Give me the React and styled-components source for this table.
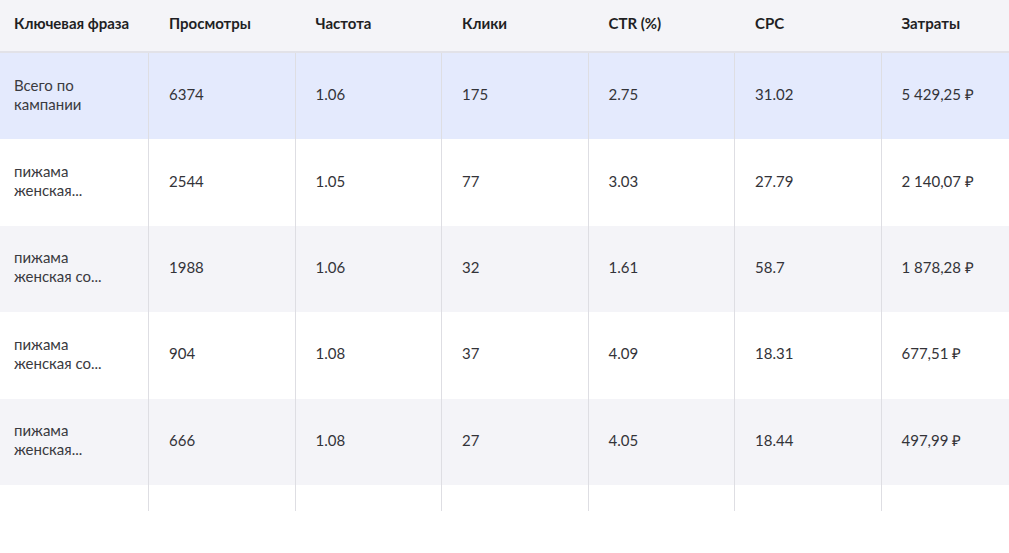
import styled, { createGlobalStyle } from "styled-components";

const GlobalStyle = createGlobalStyle`
	html, body {
		margin: 0;
		padding: 0;
		background: #fff;
		font-family: Lato, "Open Sans", sans-serif;
	}
`;

const columns = ["Ключевая фраза", "Просмотры", "Частота", "Клики", "CTR (%)", "CPC", "Затраты"];

const rows = [
	{ phrase: "Всего по кампании", values: ["6374", "1.06", "175", "2.75", "31.02", "5 429,25 ₽"], total: true },
	{ phrase: "пижама женская...", values: ["2544", "1.05", "77", "3.03", "27.79", "2 140,07 ₽"] },
	{ phrase: "пижама женская со...", values: ["1988", "1.06", "32", "1.61", "58.7", "1 878,28 ₽"] },
	{ phrase: "пижама женская со...", values: ["904", "1.08", "37", "4.09", "18.31", "677,51 ₽"] },
	{ phrase: "пижама женская...", values: ["666", "1.08", "27", "4.05", "18.44", "497,99 ₽"] },
];

const Grid = `
	display: grid;
	grid-template-columns: 148px repeat(5, 146.5px) 146px;
`;

const Table = styled.div`
	width: 1027px;
	overflow: hidden;
`;

const HeadRow = styled.div`
	${Grid}
	height: 51px;
	background: #f4f4f8;
	border-bottom: 2px solid #e2e2e8;
`;

const HeadCell = styled.div`
	display: flex;
	align-items: center;
	padding-left: ${(p) => (p.$first ? "14px" : "21px")};
	font-size: 15px;
	font-weight: 700;
	color: #1f1f24;
	padding-bottom: 6px;
`;

const Row = styled.div`
	${Grid}
	height: ${(p) => (p.$filler ? "26px" : "86.4px")};
	background: ${(p) => (p.$total ? "#e4eafd" : p.$striped ? "#f4f4f8" : "#fff")};
`;

const Cell = styled.div`
	display: flex;
	align-items: center;
	padding-left: ${(p) => (p.$first ? "14px" : "20px")};
	padding-right: 12px;
	font-size: 15px;
	line-height: 19px;
	color: ${(p) => (p.$first ? "#3a3a40" : "#333338")};
	border-left: ${(p) => (p.$first ? "none" : "1.5px solid #dedee3")};
	padding-bottom: 3px;
`;

const Phrase = styled.span`
	display: block;
	width: 96px;
`;

export default function App() {
	return (
		<>
			<GlobalStyle />
			<Table>
				<HeadRow>
					{columns.map((c, i) => (
						<HeadCell key={c} $first={i === 0}>
							{c}
						</HeadCell>
					))}
				</HeadRow>
				{rows.map((r, i) => (
					<Row key={i} $total={r.total} $striped={i % 2 === 0}>
						<Cell $first>
							<Phrase>{r.phrase}</Phrase>
						</Cell>
						{r.values.map((v, j) => (
							<Cell key={j}>{v}</Cell>
						))}
					</Row>
				))}
				<Row $filler>
					{columns.map((c, i) => (
						<Cell key={c} $first={i === 0} />
					))}
				</Row>
			</Table>
		</>
	);
}
